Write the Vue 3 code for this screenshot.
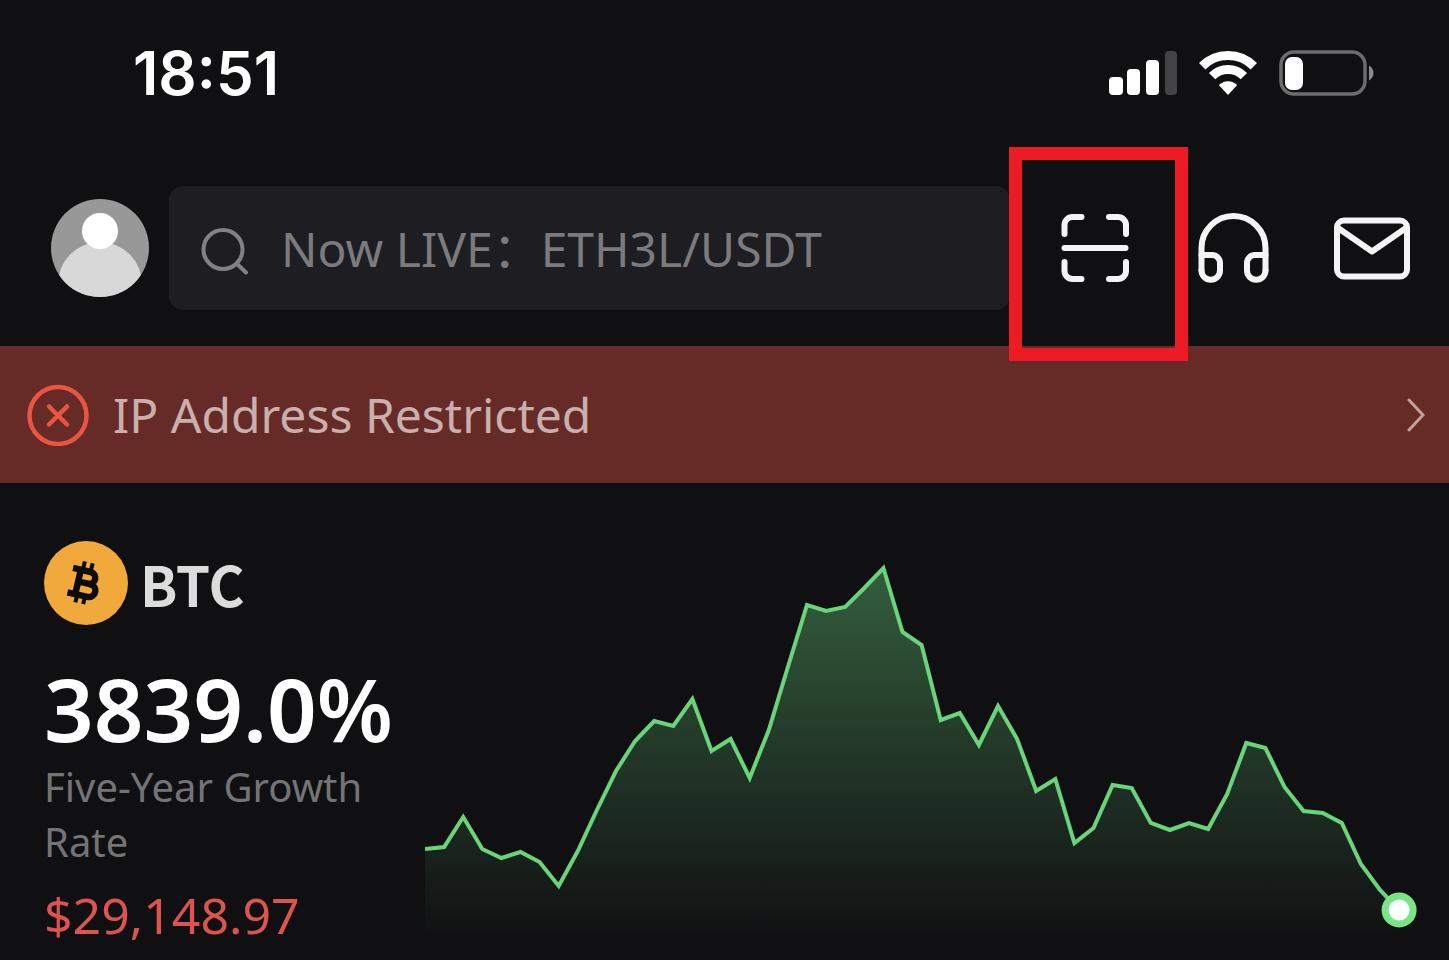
<template>
  <div class="screen">
    <div class="status">
      <span class="clock">18:51</span>
      <div class="indicators">
        <svg width="69" height="46" viewBox="0 0 69 46" aria-label="Signal">
          <rect x="1" y="27" width="14" height="18" rx="4" fill="#fff" />
          <rect x="19" y="19" width="13" height="26" rx="4" fill="#fff" />
          <rect x="38" y="10" width="13" height="35" rx="4" fill="#fff" />
          <rect x="57" y="1" width="12" height="44" rx="4" fill="#434345" />
        </svg>
        <svg width="60" height="46" viewBox="0 0 60 46" aria-label="Wi-Fi">
          <g fill="none" stroke="#fff" stroke-width="9">
            <path d="M4.200 16.200a36.500 36.500 0 0 1 51.600 0" />
            <path d="M14.100 26.100a22.500 22.500 0 0 1 31.800 0" />
          </g>
          <path d="M30 45L20.800 35a13 13 0 0 1 18.400 0z" fill="#fff" />
        </svg>
        <svg width="95" height="46" viewBox="0 0 95 46" aria-label="Battery">
          <rect x="2" y="2" width="84" height="42" rx="13" fill="none" stroke="#6c6c6e" stroke-width="3.500" />
          <rect x="6" y="7" width="18" height="33" rx="7" fill="#fff" />
          <path d="M90 15.500c6 3 6 12 0 15z" fill="#8a8a8c" />
        </svg>
      </div>
    </div>

    <header class="header">
      <button class="avatar" aria-label="Profile">
        <svg width="98" height="98" viewBox="0 0 98 98">
          <clipPath id="face"><circle cx="49" cy="49" r="49" /></clipPath>
          <g clip-path="url(#face)">
            <rect width="98" height="98" fill="#989898" />
            <circle cx="49" cy="85" r="42" fill="#d8d8d8" />
            <circle cx="49" cy="32" r="18" fill="#fff" />
          </g>
        </svg>
      </button>
      <label class="search">
        <svg width="48" height="54" viewBox="0 0 48 54" fill="none" stroke="#828284" stroke-width="4" stroke-linecap="round">
          <circle cx="22" cy="28.500" r="19.500" />
          <path d="M36 43l9 8.500" />
        </svg>
        <input type="text" aria-label="Search" placeholder="Now LIVE：ETH3L/USDT">
      </label>
      <nav class="actions">
        <button class="marked" aria-label="Scan">
          <svg class="line-icon" viewBox="0 0 76 76">
            <path d="M6.500 24V15a8 8 0 0 1 8-8h9M51 7h9a8 8 0 0 1 8 8v9M68 52v9a8 8 0 0 1-8 8h-9M23.500 69h-9a8 8 0 0 1-8-8v-9M6.500 38h61" />
          </svg>
        </button>
        <button aria-label="Support">
          <svg class="line-icon" viewBox="0 0 76 76">
            <path d="M5.500 60V38a32 32 0 0 1 64 0v22" />
            <path d="M5.500 45H16a8 8 0 0 1 8 8v7.500a9.250 9.250 0 0 1-18.500 0M69.500 45H59a8 8 0 0 0-8 8v7.500a9.250 9.250 0 0 0 18.500 0" />
          </svg>
        </button>
        <button aria-label="Messages">
          <svg class="line-icon" viewBox="0 0 76 76">
            <rect x="3" y="10.500" width="70" height="56" rx="7" />
            <path d="M4 18l34 23.500L72 18" />
          </svg>
        </button>
      </nav>
    </header>

    <a class="banner" href="#">
      <svg width="62" height="62" viewBox="0 0 62 62" fill="none" stroke="#ea5543" stroke-width="4.500" stroke-linecap="round">
        <circle cx="31" cy="31.500" r="28.500" />
        <path d="M22 22.500l18 18M40 22.500L22 40.500" />
      </svg>
      <span>IP Address Restricted</span>
      <svg class="chevron" width="18" height="34" viewBox="0 0 18 34" fill="none" stroke="#c3a19f" stroke-width="3" stroke-linecap="round">
        <path d="M2 2l14 15L2 32" />
      </svg>
    </a>

    <main class="coin">
      <section class="info">
        <h1 class="name">
          <svg width="84" height="84" viewBox="0 0 84 84">
            <circle cx="42" cy="42" r="42" fill="#f2a93b" />
            <g transform="rotate(13 41 42)" fill="none" stroke="#0d0a05" stroke-width="6.500">
              <path d="M26 30h18a6 6 0 0 1 0 12h-8M44 42h2.500a6.500 6.500 0 0 1 0 13H26M34 30v25" />
              <path d="M36 21v7M44 21v7M36 56v7M44 56v7" stroke-width="4" />
            </g>
          </svg>
          <span>BTC</span>
        </h1>
        <p class="growth">3839.0%</p>
        <p class="caption">Five-Year Growth Rate</p>
        <p class="price">$29,148.97</p>
      </section>
      <svg class="chart" :viewBox="`0 0 ${width} ${height}`">
        <defs>
          <linearGradient id="fade" gradientUnits="userSpaceOnUse" x1="0" y1="8" x2="0" :y2="height">
            <stop offset="0" stop-color="#70dc84" stop-opacity="0.38" />
            <stop offset="1" stop-color="#70dc84" stop-opacity="0" />
          </linearGradient>
        </defs>
        <polygon :points="area" fill="url(#fade)" />
        <polyline :points="line" fill="none" stroke="#6ad47b" stroke-width="4" />
        <circle :cx="last.x" :cy="last.y" r="14" fill="#fff" stroke="#79e686" stroke-width="7" />
      </svg>
    </main>
  </div>
</template>

<script setup>
  import { computed } from "vue";

  const width = 992;
  const height = 380;
  const step = 19.1;

  // distance from the top of the chart
  const values = [
    289, 287, 257, 289, 298, 292, 302, 326, 291, 250, 211, 181, 161,
    166, 139, 191, 179, 218, 170, 107, 45, 51, 47, 28, 8, 72,
    85, 160, 153, 185, 146, 179, 231, 219, 283, 268, 225, 228, 263,
    270, 263, 269, 234, 183, 188, 227, 251, 253, 263, 304, 330, 350
  ];

  const points = values.map((y, i) => ({ x: i * step, y }));
  const last = points[points.length - 1];

  const line = computed(() => points.map((p) => `${p.x},${p.y}`).join(" "));
  const area = computed(() => `0,${height} ${line.value} ${last.x},${height}`);
</script>

<style>
  body {
    margin: 0;
    background: #101012;
  }
</style>

<style scoped>
  .screen {
    min-height: 100vh;
    background: #101012;
    color: #fff;
    font-family: "Noto Sans", "Noto Sans CJK SC", sans-serif;
    font-size: 48px;
  }

  button {
    display: block;
    padding: 0;
    border: 0;
    background: none;
    color: inherit;
  }

  svg {
    display: block;
    flex: none;
  }

  .status {
    display: flex;
    align-items: center;
    justify-content: space-between;
    height: 146px;
    padding: 0 75px 0 133px;
  }

  .clock {
    font-family: Inter, sans-serif;
    font-size: 60px;
    font-weight: 600;
  }

  .indicators {
    display: flex;
    gap: 21px;
  }

  .header {
    display: flex;
    align-items: center;
    padding: 40px 39px 36px 51px;
  }

  .search {
    flex: 1;
    display: flex;
    align-items: center;
    gap: 32px;
    min-width: 0;
    height: 124px;
    margin: 0 48px 0 20px;
    padding: 0 32px;
    box-sizing: border-box;
    border-radius: 14px;
    background: #1e1d22;
  }

  .search input {
    flex: 1;
    min-width: 0;
    padding: 0;
    border: 0;
    outline: 0;
    background: none;
    color: #fff;
    font: inherit;
  }

  .search input::placeholder {
    color: #7b7b7d;
    opacity: 1;
  }

  .actions {
    display: flex;
    gap: 62px;
  }

  .line-icon {
    width: 76px;
    height: 76px;
    fill: none;
    stroke: #f4f4f4;
    stroke-width: 6;
    stroke-linecap: round;
    stroke-linejoin: round;
  }

  .marked {
    position: relative;
  }

  .marked::after {
    content: "";
    position: absolute;
    z-index: 1;
    inset: -63px -54px -75px -49px;
    border: 13px solid #ed1c24;
  }

  .banner {
    display: flex;
    align-items: center;
    gap: 24px;
    height: 137px;
    padding: 0 24px 0 27px;
    background: #662b26;
    color: #c9b0ae;
    text-decoration: none;
  }

  .chevron {
    margin-left: auto;
  }

  .coin {
    display: flex;
    padding: 58px 32px 0 44px;
  }

  .info {
    flex: none;
    width: 381px;
  }

  .name {
    display: flex;
    align-items: center;
    gap: 12px;
    margin: 0;
    color: #dcdcdc;
    font-family: "Noto Sans CJK SC", sans-serif;
    font-size: 55px;
    font-weight: 700;
    line-height: 76px;
  }

  .growth {
    margin: 32px 0 0;
    font-size: 87px;
    font-weight: 600;
    line-height: 102px;
  }

  .caption {
    width: 340px;
    margin: 0;
    color: #747476;
    font-size: 40px;
    line-height: 55px;
  }

  .price {
    margin: 16px 0 0;
    color: #dd5350;
    font-size: 50px;
    line-height: 60px;
  }

  .chart {
    flex: 1;
    min-width: 0;
    margin-top: 19px;
    align-self: flex-start;
  }
</style>
